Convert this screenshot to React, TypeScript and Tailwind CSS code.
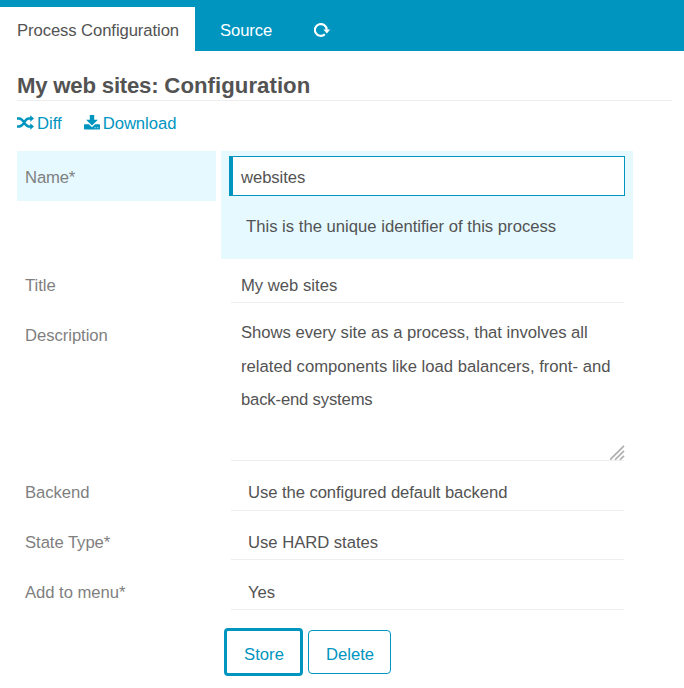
import type { ReactNode } from "react";

function RefreshIcon() {
  return (
    <svg width="18" height="16" viewBox="0 0 18 16" fill="none">
      <path d="M10.800 12.300A5.900 5.900 0 1 1 12.700 7.800" stroke="#fff" strokeWidth="2.200" />
      <path d="M9.400 7.500h6.800l-3.400 3.900z" fill="#fff" />
    </svg>
  );
}

function ShuffleIcon() {
  return (
    <svg width="18" height="16" viewBox="0 0 18 16" fill="none">
      <path d="M0 3.500h2.200c5.200 0 4.800 8 9.600 8h2.200M0 11.500h2.200c5.200 0 4.800-8 9.600-8h2.200" stroke="#0095bf" strokeWidth="2.300" />
      <path d="M13.300.3 17 3.500l-3.700 3.200zM13.300 8.300l3.700 3.200-3.700 3.200z" fill="#0095bf" />
    </svg>
  );
}

function DownloadIcon() {
  return (
    <svg width="16" height="16" viewBox="0 0 16 16">
      <path d="M5.800 0h4.400v4.800h3.700L8 10.500 2.100 4.800h3.700z" fill="#0095bf" />
      <path
        fillRule="evenodd"
        d="M.8 9.300h4.100L8 12.200l3.100-2.900h4.100q.8 0 .8.800v3.600q0 .8-.8.800H.8q-.8 0-.8-.8v-3.600q0-.8.8-.8zM10.600 12.300v1h1v-1zM13.200 12.300v1h1v-1z"
        fill="#0095bf"
      />
    </svg>
  );
}

function Row({ label, height, children }: { label: string; height: string; children: ReactNode }) {
  return (
    <div className={`flex gap-[5px] ${height}`}>
      <label className="h-[50px] w-[199px] pl-2 pt-[10px] tracking-[-0.05px] text-[#7f7f7f]">{label}</label>
      <div className="w-[412px] pl-[10px] pr-[9px]">{children}</div>
    </div>
  );
}

export default function App() {
  return (
    <div className="h-[688px] w-[684px] overflow-hidden bg-white font-['Liberation_Sans',Arial,sans-serif] text-[16.66px] leading-[34px] text-[#535353]">
      <header className="flex h-[51px] items-end bg-[#0095bf]">
        <div className="h-[44px] w-[195px] bg-white pl-[17px] pt-[7px] tracking-[-0.09px]">Process Configuration</div>
        <div className="h-[44px] pl-[25px] pt-[7px] tracking-[-0.1px] text-white">Source</div>
        <div className="ml-[42px] flex h-[44px] pt-[15px]">
          <RefreshIcon />
        </div>
      </header>
      <main className="pl-[17px] pr-3">
        <h1 className="h-[50px] border-b border-[#eeeeee] pt-[18px] text-[22.2px] font-bold leading-[34px]">
          <span className="tracking-[-0.22px]">My web sites: </span>
          <span className="tracking-[0.04px]">Configuration</span>
        </h1>
        <nav className="flex h-[50px] pt-[6px] text-[#0095bf]">
          <a className="flex gap-[2px]">
            <span className="pt-[8px]"><ShuffleIcon /></span>Diff
          </a>
          <a className="ml-[22px] flex gap-[3px]">
            <span className="pt-[8px]"><DownloadIcon /></span><span className="tracking-[-0.05px]">Download</span>
          </a>
        </nav>
        <form>
          <div className="flex h-[108px] items-start gap-[5px]">
            <label className="h-[50px] w-[199px] bg-[#e5f9ff] pl-2 pt-[10px] tracking-[-0.15px] text-[#7f7f7f]">Name*</label>
            <div className="h-[108px] w-[412px] bg-[#e5f9ff] pl-2 pr-2 pt-[5px]">
              <div className="h-[40px] border border-l-4 border-[#0095bf] bg-white pl-2 pt-[4px] tracking-[-0.08px]">websites</div>
              <p className="pl-[17px] pt-[14px]">This is the unique identifier of this process</p>
            </div>
          </div>
          <Row label="Title" height="h-[50px]">
            <div className="h-[44px] border-b border-[#eeeeee] pl-[10px] pt-[10px]">My web sites</div>
          </Row>
          <Row label="Description" height="h-[157px]">
            <div className="relative h-[152px] border-b border-[#eeeeee] pl-[10px] pt-[7.300px] leading-[33.4px]">
              <span className="tracking-[-0.03px]">Shows every site as a process, that involves all</span>
              <br />
              related components like load balancers, front- and
              <br />
              <span className="tracking-[-0.17px]">back-end systems</span>
              <svg className="absolute -right-px bottom-0" width="15" height="15" viewBox="0 0 15 15" stroke="#b0b0b0" strokeWidth="1.700">
                <path d="M0 14.800L14 .8M5 14.800l9-9M10 14.800l4-4" />
              </svg>
            </div>
          </Row>
          <Row label="Backend" height="h-[50px]">
            <div className="h-[45px] border-b border-[#eeeeee] pl-[17px] pt-[10px] tracking-[-0.08px]">Use the configured default backend</div>
          </Row>
          <Row label="State Type*" height="h-[50px]">
            <div className="h-[44px] border-b border-[#eeeeee] pl-[17px] pt-[10px] tracking-[-0.03px]">Use HARD states</div>
          </Row>
          <Row label="Add to menu*" height="h-[50px]">
            <div className="h-[44px] border-b border-[#eeeeee] pl-[17px] pt-[10px]">Yes</div>
          </Row>
          <div className="flex items-center gap-[5px] pl-[207px] pt-[12px] text-[#0095bf]">
            <button type="button" className="h-[48px] w-[79px] rounded-[4px] border-[3px] border-[#0095bf] pl-px pt-[6px]">Store</button>
            <button type="button" className="h-[44px] w-[83px] rounded-[4px] border border-[#0095bf] pl-px pt-[6px]">Delete</button>
          </div>
        </form>
      </main>
    </div>
  );
}
